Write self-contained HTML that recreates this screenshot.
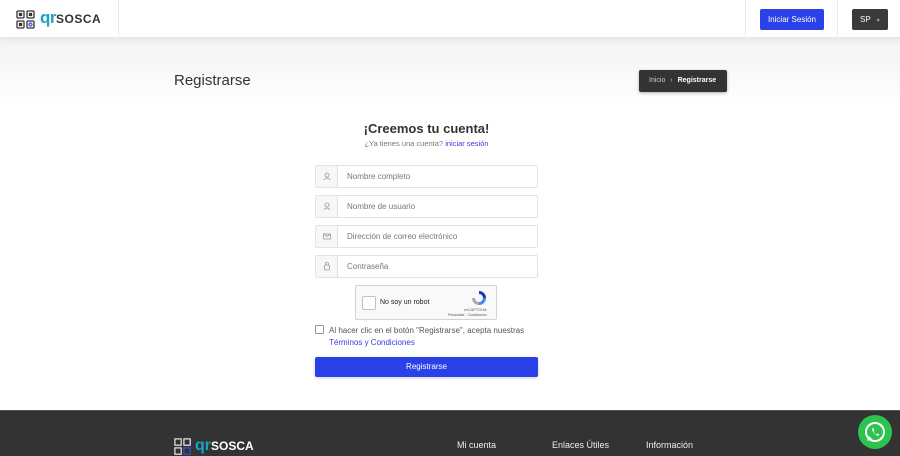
<!DOCTYPE html>
<html><head><meta charset="utf-8"><style>
*{box-sizing:border-box;margin:0;padding:0}
body{width:900px;height:456px;overflow:hidden;font-family:"Liberation Sans",sans-serif;background:#fff;position:relative}
.hdr{position:absolute;left:0;top:0;width:900px;height:38px;background:#fff;border-bottom:1px solid #e6e6e6;box-shadow:0 2px 6px rgba(0,0,0,.06);z-index:2}
.vl{position:absolute;top:0;height:38px;width:1px;background:#ececec}
.hero{position:absolute;left:0;top:38px;width:900px;height:70px;background:linear-gradient(#f3f3f3,#fff)}
.abs{position:absolute}
.inp{position:absolute;left:315px;width:223px;height:23px;border:1px solid #e3e3e3;border-radius:2px;background:#fff}
.inp .ic{position:absolute;left:0;top:0;width:22px;height:21px;background:#f7f7f7;border-right:1px solid #e3e3e3}
.inp span{position:absolute;left:31px;top:6px;font-size:8px;color:#777}
.foot{position:absolute;left:0;top:410px;width:900px;height:46px;background:#333;border-top:1px solid #555}
.fl{position:absolute;top:440px;font-size:9px;color:#eee}
</style></head><body>
<div class="hdr">
 <svg class="abs" style="left:16px;top:10px" width="20" height="20" viewBox="0 0 20 20" fill="none" stroke="#333" stroke-width="1.3">
  <rect x="1" y="1" width="7" height="7" rx="1"/><rect x="11" y="1" width="7" height="7" rx="1"/><rect x="1" y="11" width="7" height="7" rx="1"/><rect x="11" y="11" width="7" height="7" rx="1"/>
  <rect x="3.5" y="3.5" width="2" height="2" fill="#333"/><rect x="13.5" y="3.5" width="2" height="2" fill="#333"/><rect x="3.5" y="13.5" width="2" height="2" fill="#333"/><circle cx="14.5" cy="14.5" r="1.5" stroke="#3a4fe0"/>
 </svg>
 <div class="abs" style="left:40px;top:8px;font-size:17px;font-weight:bold;color:#1aa3c2;letter-spacing:-0.5px">qr<span style="color:#333;font-size:12px;letter-spacing:0.5px">SOSCA</span></div>
 <div class="vl" style="left:118px"></div><div class="vl" style="left:745px"></div><div class="vl" style="left:837px"></div>
 <div class="abs" style="left:760px;top:9px;width:64px;height:21px;background:#2a40e8;border-radius:2px;color:#fff;font-size:8px;text-align:center;line-height:21px">Iniciar Sesión</div>
 <div class="abs" style="left:852px;top:9px;width:36px;height:21px;background:#3a3a3a;border-radius:2px;color:#fff;font-size:8px;line-height:21px;padding-left:8px">SP <span style="font-size:5px;color:#aaa;margin-left:3px">▼</span></div>
</div>
<div class="hero"></div>
<div class="abs" style="left:174px;top:72px;font-size:15px;color:#333">Registrarse</div>
<div class="abs" style="left:639px;top:70px;width:88px;height:22px;background:#333;border-radius:2px;font-size:7px;color:#ccc;line-height:22px;padding-left:10px;box-shadow:0 1px 3px rgba(0,0,0,.3)">Inicio <span style="margin:0 3px">›</span> <b style="color:#fff">Registrarse</b></div>
<div class="abs" style="left:0;width:853px;top:121px;text-align:center;font-size:13px;font-weight:bold;color:#333">¡Creemos tu cuenta!</div>
<div class="abs" style="left:0;width:853px;top:139px;text-align:center;font-size:7.5px;color:#777">¿Ya tienes una cuenta? <span style="color:#3a3ae0">iniciar sesión</span></div>
<div class="inp" style="top:165px"><div class="ic"><svg width="22" height="21"><circle cx="11" cy="9" r="2" fill="none" stroke="#999" stroke-width=".8"/><path d="M8 14q3-4 6 0" fill="none" stroke="#999" stroke-width=".8"/></svg></div><span>Nombre completo</span></div>
<div class="inp" style="top:195px"><div class="ic"><svg width="22" height="21"><circle cx="11" cy="9" r="2" fill="none" stroke="#999" stroke-width=".8"/><path d="M8 14q3-4 6 0" fill="none" stroke="#999" stroke-width=".8"/></svg></div><span>Nombre de usuario</span></div>
<div class="inp" style="top:225px"><div class="ic"><svg width="22" height="21"><rect x="7.5" y="8" width="7" height="5" fill="none" stroke="#999" stroke-width=".8"/><path d="M7.5 8l3.5 2.5 3.5-2.5" fill="none" stroke="#999" stroke-width=".8"/></svg></div><span>Dirección de correo electrónico</span></div>
<div class="inp" style="top:255px"><div class="ic"><svg width="22" height="21"><rect x="8.5" y="9" width="5" height="5" rx="1.5" fill="none" stroke="#999" stroke-width=".8"/><path d="M9.5 9V8a1.5 1.5 0 013 0v1" fill="none" stroke="#999" stroke-width=".8"/></svg></div><span>Contraseña</span></div>
<div class="abs" style="left:355px;top:285px;width:142px;height:35px;border:1px solid #d3d3d3;background:#f9f9f9;border-radius:2px">
 <div class="abs" style="left:6px;top:10px;width:14px;height:14px;border:1.5px solid #c1c1c1;background:#fff;border-radius:2px"></div>
 <div class="abs" style="left:24px;top:13px;font-size:7px;color:#222">No soy un robot</div>
 <svg class="abs" style="left:115px;top:4px" width="16" height="16" viewBox="0 0 16 16"><path d="M8 1a7 7 0 017 7h-3a4 4 0 00-4-4z" fill="#1c3aa9"/><path d="M15 8a7 7 0 01-7 7v-3a4 4 0 004-4z" fill="#4285f4"/><path d="M8 15a7 7 0 01-7-7h3a4 4 0 004 4z" fill="#ababab"/></svg>
 <div class="abs" style="left:108px;top:21px;font-size:4px;color:#555">reCAPTCHA</div>
 <div class="abs" style="left:92px;top:27px;font-size:3.5px;color:#555">Privacidad - Condiciones</div>
</div>
<div class="abs" style="left:315px;top:325px;width:9px;height:9px;border:1px solid #999;border-radius:1px"></div>
<div class="abs" style="left:329px;top:325px;font-size:8px;color:#555;line-height:12px">Al hacer clic en el botón "Registrarse", acepta nuestras<br><span style="color:#3a3ae0">Términos y Condiciones</span></div>
<div class="abs" style="left:315px;top:357px;width:223px;height:20px;background:#2a40e8;border-radius:2px;color:#fff;font-size:8px;text-align:center;line-height:20px;box-shadow:0 1px 3px rgba(0,0,0,.2)">Registrarse</div>
<div class="foot"></div>
<svg class="abs" style="left:174px;top:438px" width="18" height="18" viewBox="0 0 20 20" fill="none" stroke="#eee" stroke-width="1.3"><rect x="1" y="1" width="7" height="7"/><rect x="11" y="1" width="7" height="7"/><rect x="1" y="11" width="7" height="7"/><rect x="11" y="11" width="7" height="7" stroke="#3a4fe0"/></svg>
<div class="abs" style="left:195px;top:437px;font-size:16px;font-weight:bold;color:#1aa3c2">qr<span style="color:#fff;font-size:12px">SOSCA</span></div>
<div class="fl" style="left:457px">Mi cuenta</div>
<div class="fl" style="left:552px">Enlaces Útiles</div>
<div class="fl" style="left:646px">Información</div>
<div class="abs" style="left:858px;top:415px;width:34px;height:34px;border-radius:50%;background:#2ec34f">
 <svg width="34" height="34" viewBox="0 0 34 34"><circle cx="17" cy="17" r="9" fill="none" stroke="#fff" stroke-width="2"/><path d="M9 26l2-5 3 3z" fill="#fff"/><path d="M14 13q0 5 6 8l1.5-1.5-2-1-1 1q-2-1-3-3l1-1-1-2z" fill="#fff"/></svg>
</div>
</body></html>
